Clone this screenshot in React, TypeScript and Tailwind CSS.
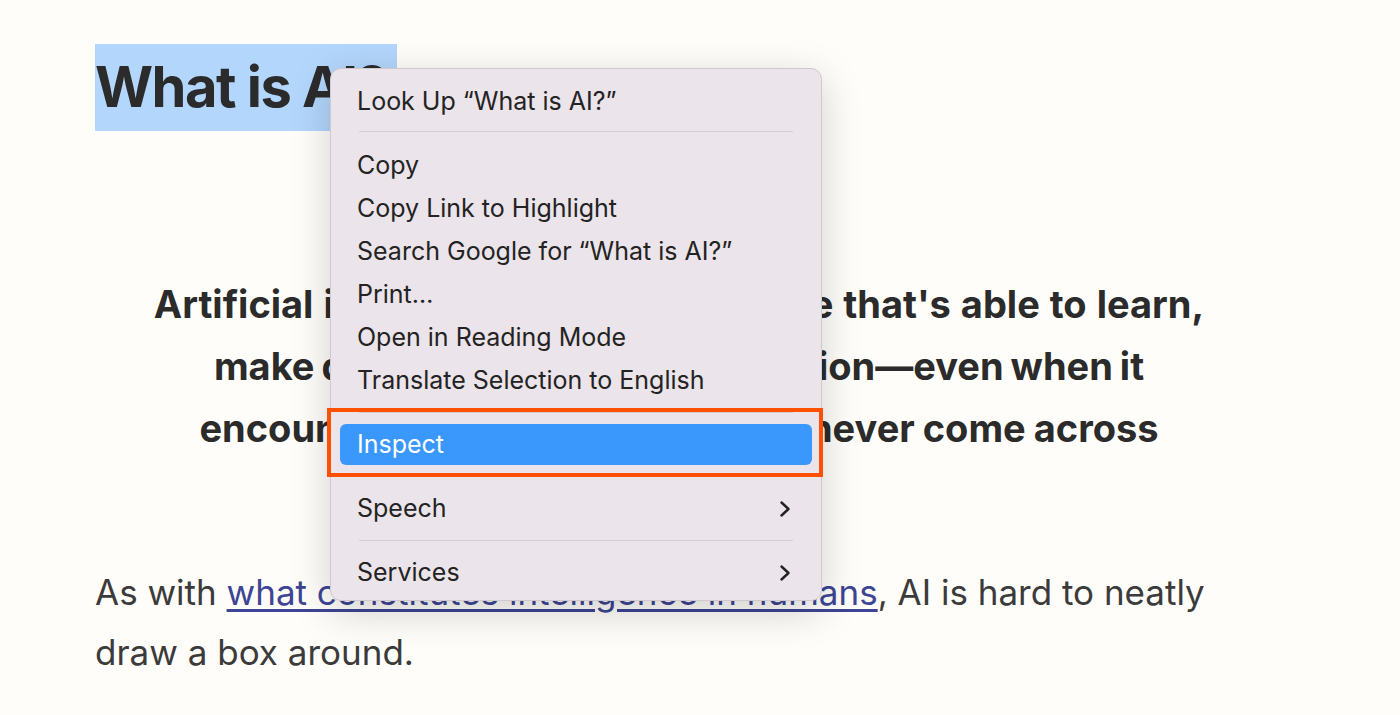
import type { ReactNode } from "react";

const MENU_FONT = { fontFamily: "Inter, 'Noto Sans', sans-serif" };

function Chevron() {
  return (
    <svg width="12" height="18" viewBox="0 0 12 18" fill="none" aria-hidden="true">
      <polyline
        points="2.5,2.5 9.5,9 2.5,15.5"
        stroke="#232323"
        strokeWidth="2.4"
        strokeLinecap="round"
        strokeLinejoin="round"
      />
    </svg>
  );
}

function MenuItem({ children, submenu }: { children: ReactNode; submenu?: boolean }) {
  return (
    <div className="mx-[9px] flex h-[43px] items-center justify-between rounded-[6px] pl-[17px] pr-[21px] text-[25px] text-[#232323]">
      <span>{children}</span>
      {submenu && <Chevron />}
    </div>
  );
}

function Separator() {
  return <div className="mx-[28px] my-[10px] h-px bg-[#d4cdd4]" />;
}

function ContextMenu() {
  return (
    <div
      className="absolute left-[330px] top-[68px] w-[492px] rounded-[11px] border border-[#cfc9cf] bg-[#ebe4ea] pb-[6px] pt-[11px] shadow-[0_10px_40px_rgba(0,0,0,0.18)]"
      style={MENU_FONT}
    >
      <MenuItem>Look Up “What is AI?”</MenuItem>
      <div className="mx-[28px] mb-[12px] mt-[8px] h-px bg-[#d4cdd4]" />
      <MenuItem>Copy</MenuItem>
      <MenuItem>Copy Link to Highlight</MenuItem>
      <MenuItem>Search Google for “What is AI?”</MenuItem>
      <MenuItem>Print…</MenuItem>
      <MenuItem>Open in Reading Mode</MenuItem>
      <MenuItem>Translate Selection to English</MenuItem>
      <Separator />
      <div className="mx-[9px] flex h-[43px] items-center py-px">
        <div className="flex h-[41px] w-full items-center rounded-[6px] bg-[#3a98fd] pl-[17px] text-[25px] text-white">
          Inspect
        </div>
      </div>
      <Separator />
      <MenuItem submenu>Speech</MenuItem>
      <Separator />
      <MenuItem submenu>Services</MenuItem>
    </div>
  );
}

export default function App() {
  return (
    <div
      className="relative h-[715px] w-full overflow-hidden bg-[#fffdf9]"
      style={{ fontFamily: "Inter, 'Noto Sans', sans-serif" }}
    >
      <article className="w-[1263px] pl-[95px] pt-[44px]">
        <h1 className="whitespace-nowrap text-[56px] font-bold leading-[87px] tracking-[-1.5px] text-[#2b2b2b]">
          <span className="inline-block w-[302px] bg-[#b3d6fc]">What is AI?</span>
        </h1>

        <p className="mt-[142px] whitespace-nowrap text-center text-[38px] font-bold leading-[62px] text-[#2b2b2b]">
          <span className="block [word-spacing:1px]">
            Artificial intelligence (AI) is software that's able to learn,
          </span>
          <span className="block [word-spacing:-2px]">
            make decisions, and take real action—even when it
          </span>
          <span className="block [word-spacing:-1px]">
            encounters a situation that it has never come across
          </span>
          <span className="block">before.</span>
        </p>

        <p className="mt-[41px] whitespace-nowrap text-[35px] leading-[60px] text-[#3b3b3b]">
          As with{" "}
          <a className="text-[#3d4594] underline decoration-[2.5px] underline-offset-[4px]">
            what constitutes intelligence in humans
          </a>
          , AI is hard to neatly
          <br />
          draw a box around.
        </p>
      </article>

      <ContextMenu />

      <div className="pointer-events-none absolute left-[327px] top-[408px] h-[69px] w-[496px] border-4 border-[#ff4f00]" />
    </div>
  );
}
